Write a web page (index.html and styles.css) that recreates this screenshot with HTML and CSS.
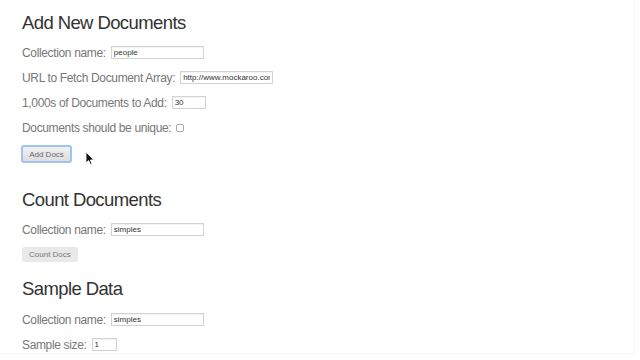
FILE: index.html
```html
<!DOCTYPE html>
<html lang="en">
<head>
    <meta charset="UTF-8">
    <meta name="viewport" content="width=device-width, initial-scale=1.0">
    <title>Mongo Docs</title>
    <link rel="stylesheet" href="styles.css">
</head>
<body>
    <main class="page">
        <!-- Add New Documents -->
        <section class="panel panel-add">
            <h1>Add New Documents</h1>
            <div class="field">
                <label for="add-collection">Collection name:</label>
                <input type="text" id="add-collection" class="input-name" value="people">
            </div>
            <div class="field">
                <label for="add-url">URL to Fetch Document Array:</label>
                <input type="text" id="add-url" class="input-name" value="http://www.mockaroo.com/">
            </div>
            <div class="field">
                <label for="add-count">1,000s of Documents to Add:</label>
                <input type="text" id="add-count" class="input-small" value="30">
            </div>
            <div class="field">
                <label for="add-unique">Documents should be unique:</label>
                <input type="checkbox" id="add-unique" class="check">
            </div>
            <button class="btn btn-focus">Add Docs</button>
            <svg class="cursor" width="10" height="15" viewBox="0 0 10 15">
                <path d="M1 1 L1 12 L3.6 9.6 L5.4 13.6 L7 12.9 L5.3 9 L8.8 9 Z" fill="#111" stroke="#fff" stroke-width="0.9" stroke-linejoin="round"/>
            </svg>
        </section>

        <!-- Count Documents -->
        <section class="panel panel-count">
            <h2>Count Documents</h2>
            <div class="field">
                <label for="count-collection">Collection name:</label>
                <input type="text" id="count-collection" class="input-name" value="simples">
            </div>
            <button class="btn">Count Docs</button>
        </section>

        <!-- Sample Data -->
        <section class="panel panel-sample">
            <h2>Sample Data</h2>
            <div class="field">
                <label for="sample-collection">Collection name:</label>
                <input type="text" id="sample-collection" class="input-name" value="simples">
            </div>
            <div class="field">
                <label for="sample-size">Sample size:</label>
                <input type="text" id="sample-size" class="input-tiny" value="1">
            </div>
        </section>
    </main>
</body>
</html>
```

FILE: styles.css
```css
/* General Styles */
body {
    font-family: 'Liberation Sans', Arial, sans-serif;
    margin: 0;
    padding: 0;
    background: #fff;
    color: #333;
    overflow: hidden;
}

.page {
    width: 612px;
    height: 353px;
    padding-left: 22px;
    border-right: 1px solid #f5f5f5;
    border-bottom: 1px solid #f7f7f7;
    overflow: hidden;
}

.panel {
    position: relative;
}

h1, h2 {
    font-size: 18.5px;
    font-weight: normal;
    letter-spacing: -0.6px;
    line-height: 22px;
    color: #333;
    margin: 0;
}

.panel-add h1 {
    padding-top: 12px;
    margin-bottom: 6px;
}

.panel-count h2 {
    margin-top: 26px;
    margin-bottom: 6px;
}

.panel-sample h2 {
    margin-top: 16px;
    margin-bottom: 7px;
}

/* Form rows */
.field {
    display: flex;
    align-items: center;
    height: 25px;
}

.field label {
    font-size: 12px;
    letter-spacing: -0.35px;
    color: #777;
}

.field input[type="text"] {
    box-sizing: border-box;
    height: 13px;
    margin: 0 0 0 5px;
    padding: 0 2px;
    border: 1px solid #d2d2d2;
    box-shadow: inset 0 1px 1px rgba(0, 0, 0, 0.05);
    font-family: 'Liberation Sans', Arial, sans-serif;
    font-size: 8px;
    color: #333;
    background: #fff;
    outline: none;
}

.input-name {
    width: 93px;
}

.input-small {
    width: 34px;
}

.input-tiny {
    width: 25px;
}

.check {
    appearance: none;
    -webkit-appearance: none;
    box-sizing: border-box;
    width: 8px;
    height: 8px;
    margin: 1px 0 0 5px;
    border: 1px solid #a8a8a8;
    border-radius: 2px;
    background: #fff;
}

/* Buttons */
.btn {
    display: block;
    box-sizing: border-box;
    height: 15px;
    padding: 0 7px;
    border: none;
    border-radius: 3px;
    background: #e9e9e9;
    font-family: 'Liberation Sans', Arial, sans-serif;
    font-size: 8px;
    color: #777;
    margin-top: 5px;
}

.btn-focus {
    height: 18px;
    width: 51px;
    margin-left: -1px;
    margin-top: 5px;
    padding: 0;
    border: 2px solid #9fc2ef;
    background: linear-gradient(#f0f0f0, #dedede);
    color: #6a6a6a;
}

.cursor {
    position: absolute;
    left: 63px;
    top: 151px;
}
```
